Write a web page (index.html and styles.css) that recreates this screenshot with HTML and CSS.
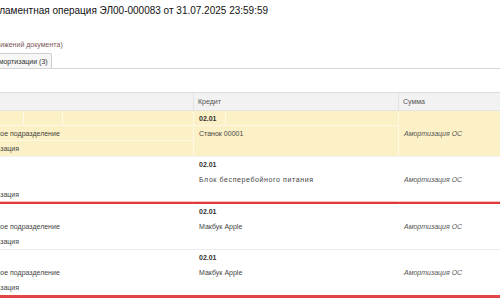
FILE: index.html
```html
<!DOCTYPE html>
<html lang="ru">
<head>
<meta charset="utf-8">
<link rel="stylesheet" href="styles.css">
</head>
<body>
<div class="page">
  <h1 class="title">Регламентная операция ЭЛ00-000083 от 31.07.2025 23:59:59</h1>
  <div class="note">(движений документа)</div>
  <div class="tabs">
    <div class="tab">Амортизации (3)</div>
  </div>
  <div class="grid">
    <div class="head">
      <div class="c ca"></div>
      <div class="c cb">Кредит</div>
      <div class="c cc">Сумма</div>
    </div>

    <div class="rec sel">
      <div class="col ca">
        <div class="sub split"><span class="p1"></span><span class="p2"></span><span class="p3"></span></div>
        <div class="sub">Основное подразделение</div>
        <div class="sub">Амортизация</div>
      </div>
      <div class="col cb">
        <div class="sub split"><b class="acc">02.01</b><span class="p4"></span></div>
        <div class="sub">Станок 00001</div>
        <div class="sub"></div>
      </div>
      <div class="col cc">
        <div class="sub"></div>
        <div class="sub it">Амортизация ОС</div>
        <div class="sub"></div>
      </div>
    </div>

    <div class="rec red">
      <div class="col ca">
        <div class="sub"></div>
        <div class="sub"></div>
        <div class="sub">Амортизация</div>
      </div>
      <div class="col cb">
        <div class="sub"><b>02.01</b></div>
        <div class="sub wide">Блок бесперебойного питания</div>
        <div class="sub"></div>
      </div>
      <div class="col cc">
        <div class="sub"></div>
        <div class="sub it">Амортизация ОС</div>
        <div class="sub"></div>
      </div>
    </div>

    <div class="rec">
      <div class="col ca">
        <div class="sub"></div>
        <div class="sub">Основное подразделение</div>
        <div class="sub">Амортизация</div>
      </div>
      <div class="col cb">
        <div class="sub"><b>02.01</b></div>
        <div class="sub">Макбук Apple</div>
        <div class="sub"></div>
      </div>
      <div class="col cc">
        <div class="sub"></div>
        <div class="sub it">Амортизация ОС</div>
        <div class="sub"></div>
      </div>
    </div>

    <div class="rec red thick">
      <div class="col ca">
        <div class="sub"></div>
        <div class="sub">Основное подразделение</div>
        <div class="sub">Амортизация</div>
      </div>
      <div class="col cb">
        <div class="sub"><b>02.01</b></div>
        <div class="sub">Макбук Apple</div>
        <div class="sub"></div>
      </div>
      <div class="col cc">
        <div class="sub"></div>
        <div class="sub it">Амортизация ОС</div>
        <div class="sub"></div>
      </div>
    </div>
  </div>
</div>
</body>
</html>
```
FILE: styles.css
```css
html, body {
  margin: 0;
  padding: 0;
  background: #fff;
  overflow: hidden;
  width: 500px;
  height: 300px;
}
body {
  font-family: "Liberation Sans", Arial, sans-serif;
  color: #444;
}
.page {
  margin-left: -30px;
  width: 530px;
}
.title {
  margin: 0;
  padding: 4px 0 0 14px;
  font-size: 10px;
  font-weight: normal;
  color: #111;
  line-height: 13px;
  height: 37px;
  box-sizing: border-box;
}
.note {
  padding-left: 20px;
  font-size: 7px;
  color: #7a5656;
  line-height: 16px;
  height: 16px;
}
.tabs {
  display: flex;
  border-bottom: 1px solid #d6d6d6;
  height: 15px;
  padding-left: 15px;
}
.tab {
  border: 1px solid #cfcfcf;
  border-bottom: none;
  border-radius: 2px 2px 0 0;
  background: #f7f7f7;
  font-size: 7px;
  color: #333;
  padding: 0 3px 0 8px;
  line-height: 15px;
  height: 15px;
  box-sizing: border-box;
}
.grid {
  margin-top: 23px;
  border-top: 1px solid #dcdcdc;
  font-size: 7px;
}
.head {
  display: flex;
  background: #f2f2f2;
  height: 18px;
  border-bottom: 1px solid #e4e4e4;
  box-sizing: border-box;
  color: #555;
}
.head .c {
  line-height: 17px;
  padding-left: 4px;
  box-sizing: border-box;
}
.ca { width: 223px; }
.cb { width: 205px; }
.cc { flex: 1; }
.head .cb, .head .cc { border-left: 1px solid #e2e2e2; }
.rec {
  display: flex;
  border-bottom: 1px solid #ececec;
}
.rec.sel { background: #fcf1c6; border-bottom-color: #f1f1f1; }
.rec.red { border-bottom: 2px solid #e33b3b; box-shadow: 0 -1px 0 #f7c0c0 inset; }
.rec.thick { border-bottom: 3px solid #e34545; box-shadow: none; }
.col {
  display: flex;
  flex-direction: column;
  box-sizing: border-box;
}
.col.cb, .col.cc { border-left: 1px solid #fff; }
.rec.sel .col.cb, .rec.sel .col.cc { border-left-color: #fff8e6; }
.sub {
  height: 15px;
  line-height: 15px;
  padding-left: 5px;
  white-space: nowrap;
  box-sizing: border-box;
}
.ca .sub { padding-left: 6px; }
.wide { letter-spacing: 0.6px; }
.rec.sel .ca .sub { border-bottom: 1px solid #fff8e6; }
.rec.sel .ca .sub:last-child { border-bottom: none; }
.rec.sel .cb .sub:first-child { border-bottom: 1px solid #fff8e6; }
.sub.split { display: flex; padding-left: 0; }
.p1 { width: 53px; border-right: 1px solid #fff8e6; }
.p2 { width: 38px; border-right: 1px solid #fff8e6; }
.p3 { flex: 1; }
.acc { width: 26px; padding-left: 5px; border-right: 1px solid #fff8e6; }
.p4 { flex: 1; }
b { font-weight: bold; color: #333; }
.it { font-style: italic; color: #555; }
```
